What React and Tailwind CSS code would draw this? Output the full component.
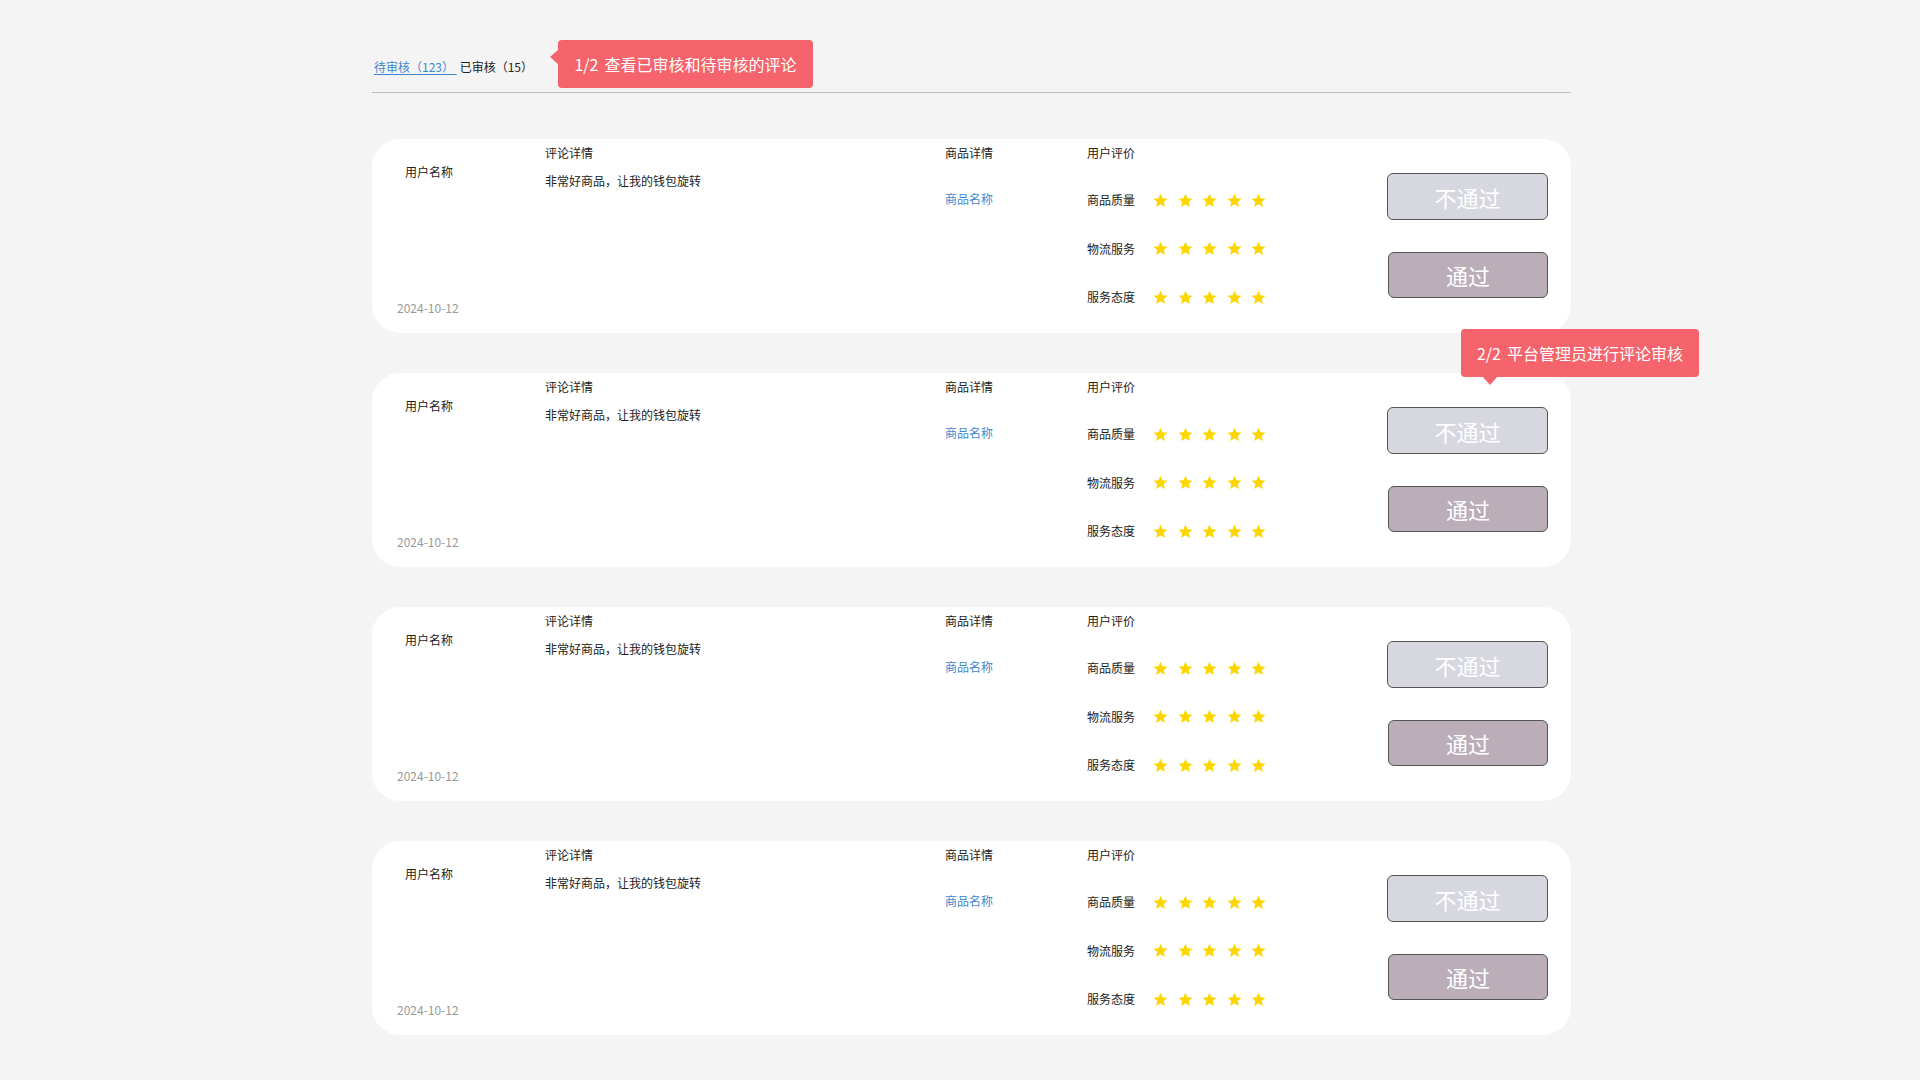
import React from 'react'

const font = { fontFamily: '"Noto Sans CJK SC", "Noto Sans", sans-serif' }

function Star() {
  return (
    <svg width="15" height="15" viewBox="0 0 24 24" className="shrink-0">
      <path
        d="M12 1l3.3 7.3 7.9.8-6 5.3 1.8 7.8L12 18.1l-7 4.1 1.8-7.8-6-5.3 7.9-.8z"
        fill="#fdd600"
      />
    </svg>
  )
}

function RatingRow({ label }) {
  return (
    <div className="flex items-center h-4">
      <span className="w-[66px] text-[12px] leading-4 text-[#222]">{label}</span>
      <div className="flex items-center gap-[9.5px]">
        <Star />
        <Star />
        <Star />
        <Star />
        <Star />
      </div>
    </div>
  )
}

function Tip({ num, text, className, children }) {
  return (
    <div className={`relative h-[48px] rounded-[4px] bg-[#f5646c] flex items-center justify-center text-white text-[16px] whitespace-nowrap ${className}`}>
      <span className="mr-[6px]">{num}</span>
      {text}
      {children}
    </div>
  )
}

function ReviewCard({ tooltip }) {
  return (
    <div className="relative flex h-[194px] bg-white rounded-[28px]">
      {/* user + date */}
      <div className="w-[173px] flex flex-col justify-between pt-[25px] pb-[17px]">
        <div className="pl-[33px] text-[12px] leading-4 text-[#222]">用户名称</div>
        <div className="pl-[25px] text-[12px] leading-4 text-[#999]">2024-10-12</div>
      </div>

      {/* comment */}
      <div className="w-[400px] pt-[6px]">
        <div className="text-[12px] leading-4 text-[#222]">评论详情</div>
        <div className="mt-[12px] text-[12px] leading-4 text-[#222]">非常好商品，让我的钱包旋转</div>
      </div>

      {/* product */}
      <div className="w-[142px] pt-[6px]">
        <div className="text-[12px] leading-4 text-[#222]">商品详情</div>
        <div className="mt-[30px] text-[12px] leading-4 text-[#3f86d0]">商品名称</div>
      </div>

      {/* ratings */}
      <div className="w-[300px] pt-[6px]">
        <div className="text-[12px] leading-4 text-[#222]">用户评价</div>
        <div className="mt-[31px] flex flex-col gap-[32.5px]">
          <RatingRow label="商品质量" />
          <RatingRow label="物流服务" />
          <RatingRow label="服务态度" />
        </div>
      </div>

      {/* actions */}
      <div className="flex flex-col pt-[34px] gap-[32px]">
        <button className="w-[161px] h-[47px] rounded-[6px] border-[1.5px] border-[#555] bg-[#d7d7df] text-white text-[22px] leading-none">
          不通过
        </button>
        <button className="w-[160px] h-[46px] ml-px rounded-[6px] border-[1.5px] border-[#555] bg-[#bbaeb9] text-white text-[22px] leading-none">
          通过
        </button>
      </div>

      {tooltip && (
        <div className="absolute left-[1089px] top-[-44px] z-10">
          <Tip num="2/2" text="平台管理员进行评论审核" className="w-[238px]">
            <div className="absolute left-[21px] bottom-[-8px] w-0 h-0 border-l-[8px] border-r-[8px] border-t-[9px] border-l-transparent border-r-transparent border-t-[#f5646c]" />
          </Tip>
        </div>
      )}
    </div>
  )
}

export default function App() {
  return (
    <div className="min-h-screen bg-[#f4f4f4] pb-[45px]" style={font}>
      <div className="ml-[372px] w-[1199px]">
        {/* tabs */}
        <div className="relative pt-[59px] pb-[17px] border-b border-[#bdbdbd]">
          <div className="flex items-center text-[12px] leading-4">
            <span className="ml-[2px] text-[#3f86d0] underline underline-offset-2 whitespace-pre">待审核（123） </span>
            <span className="ml-[3px] text-[#222]">已审核（15）</span>
          </div>
          <div className="absolute left-[186px] top-[40px]">
            <Tip num="1/2" text="查看已审核和待审核的评论" className="w-[255px]">
              <div className="absolute left-[-8px] top-[9px] w-0 h-0 border-t-[8px] border-b-[8px] border-r-[9px] border-t-transparent border-b-transparent border-r-[#f5646c]" />
            </Tip>
          </div>
        </div>

        {/* review list */}
        <div className="mt-[46px] flex flex-col gap-[40px]">
          <ReviewCard />
          <ReviewCard tooltip />
          <ReviewCard />
          <ReviewCard />
        </div>
      </div>
    </div>
  )
}
